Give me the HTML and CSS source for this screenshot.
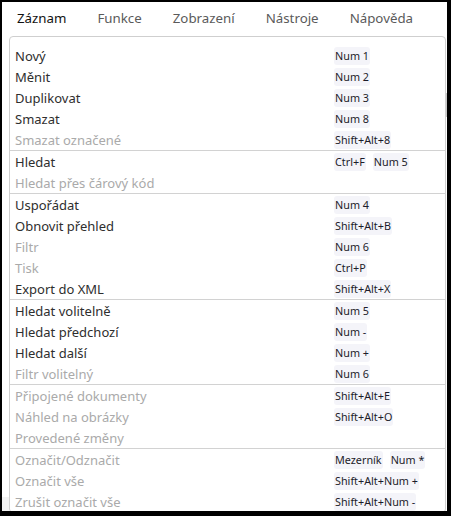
FILE: index.html
```html
<!DOCTYPE html>
<html lang="cs">
<head>
<meta charset="utf-8">
<title>Záznam</title>
<link rel="stylesheet" href="styles.css">
</head>
<body>
<div class="window">
  <div class="page-thumb"></div>
  <div class="page-footer-left"></div>
  <nav class="tabs">
    <span class="tab active">Záznam</span>
    <span class="tab">Funkce</span>
    <span class="tab">Zobrazení</span>
    <span class="tab">Nástroje</span>
    <span class="tab">Nápověda</span>
  </nav>
  <div class="menu">
    <div class="group">
      <div class="item"><span class="label">Nový</span><span class="keys"><kbd>Num 1</kbd></span></div>
      <div class="item"><span class="label">Měnit</span><span class="keys"><kbd>Num 2</kbd></span></div>
      <div class="item"><span class="label">Duplikovat</span><span class="keys"><kbd>Num 3</kbd></span></div>
      <div class="item"><span class="label">Smazat</span><span class="keys"><kbd>Num 8</kbd></span></div>
      <div class="item disabled"><span class="label">Smazat označené</span><span class="keys"><kbd>Shift+Alt+8</kbd></span></div>
    </div>
    <div class="group">
      <div class="item"><span class="label">Hledat</span><span class="keys"><kbd>Ctrl+F</kbd><kbd>Num 5</kbd></span></div>
      <div class="item disabled"><span class="label">Hledat přes čárový kód</span><span class="keys"></span></div>
    </div>
    <div class="group">
      <div class="item"><span class="label">Uspořádat</span><span class="keys"><kbd>Num 4</kbd></span></div>
      <div class="item"><span class="label">Obnovit přehled</span><span class="keys"><kbd>Shift+Alt+B</kbd></span></div>
      <div class="item disabled"><span class="label">Filtr</span><span class="keys"><kbd>Num 6</kbd></span></div>
      <div class="item disabled"><span class="label">Tisk</span><span class="keys"><kbd>Ctrl+P</kbd></span></div>
      <div class="item"><span class="label">Export do XML</span><span class="keys"><kbd>Shift+Alt+X</kbd></span></div>
    </div>
    <div class="group">
      <div class="item"><span class="label">Hledat volitelně</span><span class="keys"><kbd>Num 5</kbd></span></div>
      <div class="item"><span class="label">Hledat předchozí</span><span class="keys"><kbd>Num -</kbd></span></div>
      <div class="item"><span class="label">Hledat další</span><span class="keys"><kbd>Num +</kbd></span></div>
      <div class="item disabled"><span class="label">Filtr volitelný</span><span class="keys"><kbd>Num 6</kbd></span></div>
    </div>
    <div class="group">
      <div class="item disabled"><span class="label">Připojené dokumenty</span><span class="keys"><kbd>Shift+Alt+E</kbd></span></div>
      <div class="item disabled"><span class="label">Náhled na obrázky</span><span class="keys"><kbd>Shift+Alt+O</kbd></span></div>
      <div class="item disabled"><span class="label">Provedené změny</span><span class="keys"></span></div>
    </div>
    <div class="group">
      <div class="item disabled"><span class="label">Označit/Odznačit</span><span class="keys"><kbd>Mezerník</kbd><kbd>Num *</kbd></span></div>
      <div class="item disabled"><span class="label">Označit vše</span><span class="keys"><kbd>Shift+Alt+Num +</kbd></span></div>
      <div class="item disabled"><span class="label">Zrušit označit vše</span><span class="keys"><kbd>Shift+Alt+Num -</kbd></span></div>
    </div>
  </div>
</div>
</body>
</html>
```

FILE: styles.css
```css
html, body {
  margin: 0;
  padding: 0;
  background: #000;
}

body {
  width: 451px;
  height: 516px;
  overflow: hidden;
  font-family: "Noto Sans", "Open Sans", sans-serif;
}

.window {
  position: relative;
  margin: 2px 4px 0 2px;
  width: 445px;
  height: 509px;
  background: #fff;
  overflow: hidden;
}

.page-thumb {
  position: absolute;
  right: 0;
  top: 91px;
  width: 2px;
  height: 24px;
  background: #c9c9c9;
}

.page-footer-left {
  position: absolute;
  left: 0;
  bottom: 0;
  width: 7px;
  height: 14px;
  background: #f2f2f2;
}

.tabs {
  display: flex;
  height: 34px;
  align-items: center;
}

.tab {
  padding: 0 16px 2px 15px;
  font-size: 13.3px;
  color: #5a5a5a;
}

.tab.active {
  color: #111;
}

.menu {
  position: relative;
  margin-left: 7px;
  width: 435px;
  border: 1px solid #cfcfcf;
  border-radius: 4px;
  padding-top: 8px;
  background: #fff;
}

.group + .group {
  border-top: 1px solid #d2d2d2;
}

.item {
  display: grid;
  grid-template-columns: 324px 1fr;
  height: 21px;
  align-items: center;
}

.label {
  padding-left: 5px;
  font-size: 13px;
  color: #2e2e2e;
  white-space: nowrap;
}

.item.disabled .label {
  color: #aaaaaa;
}

.keys {
  display: flex;
  gap: 7px;
}

kbd {
  font-family: "Noto Sans", "Open Sans", sans-serif;
  font-size: 10.8px;
  line-height: 18px;
  padding: 0 1px;
  color: #1c1c2a;
  background: #f4f4f9;
  border-radius: 3px;
}
```
